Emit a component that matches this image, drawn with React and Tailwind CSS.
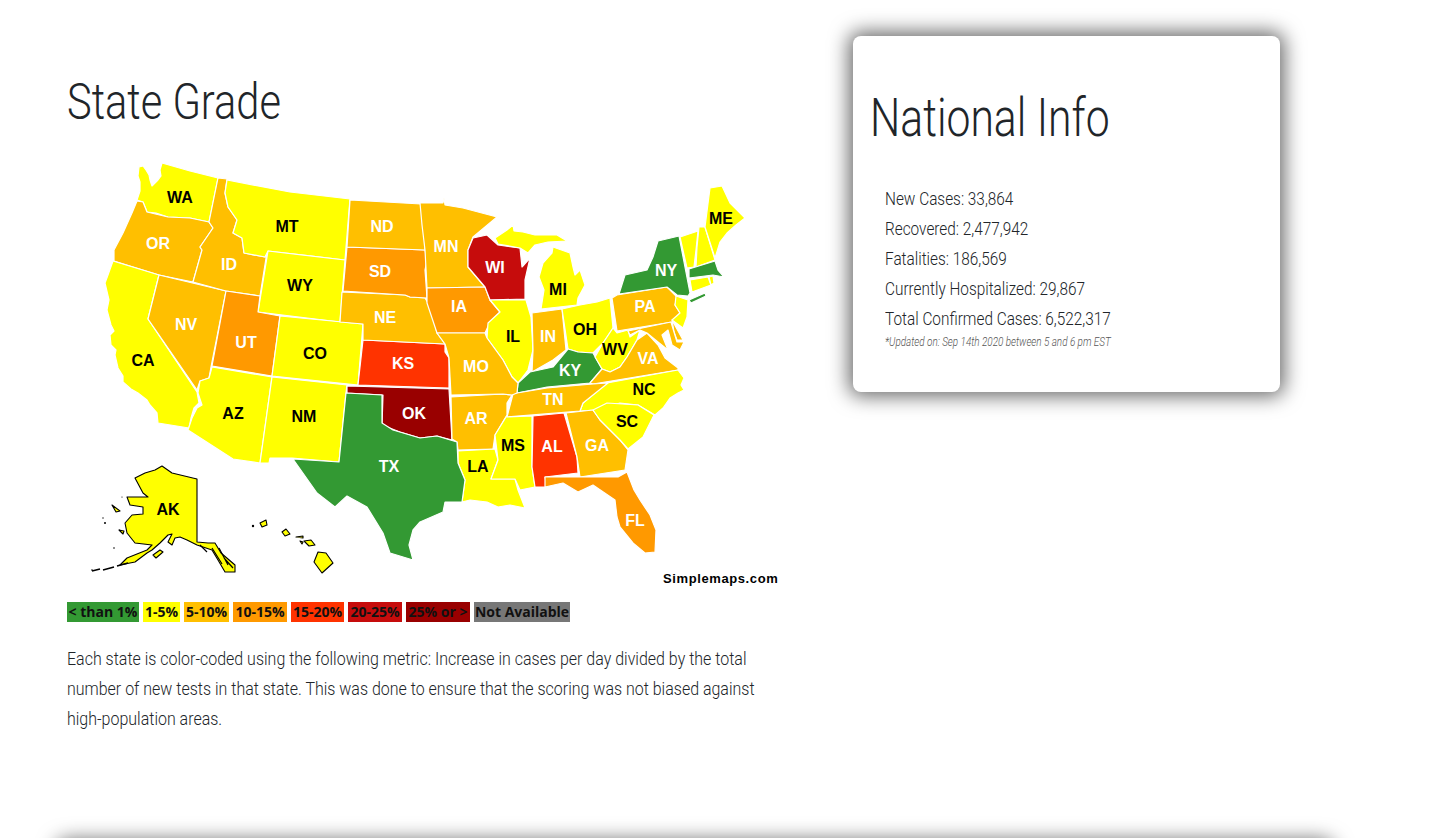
const G = "#339933", Y = "#ffff00", A = "#ffbf00", O = "#ff9900", R = "#ff3300", C = "#c60c0c", D = "#990000";

const states = [
  ["WA", Y, "139,167 143,166 146,170 149,175 150,180 152,186 155,183 158,180 161,176 160,170 162,163 190,171 218,178 209,222 190,218 168,217 156,213 147,212 143,202 137,200 140,191 140,182 138,176"],
  ["OR", A, "137,201 143,202 147,212 168,217 190,218 209,222 213,228 200,247 202,250 193,282 159,275 114,261 114,250 123,233 132,213"],
  ["CA", Y, "113,261 159,275 148,319 197,392 199,403 194,408 191,418 189,428 158,423 157,413 150,405 147,400 138,393 131,389 123,382 123,376 118,368 115,355 116,350 111,345 110,335 114,331 111,325 107,310 109,300 105,283 108,275"],
  ["NV", A, "159,275 226,291 211,367 209,378 200,381 197,390 148,319"],
  ["ID", A, "218,178 227,179 225,193 228,207 237,220 233,233 242,238 244,253 265,257 267,252 260,296 226,291 193,282 202,250 200,247 213,228 209,222"],
  ["MT", Y, "227,180 290,192 350,199 345,260 268,251 265,257 244,253 242,238 233,233 237,220 228,207 225,193"],
  ["WY", Y, "268,251 345,260 340,322 258,312"],
  ["UT", O, "226,291 260,296 258,312 280,316 272,376 212,366"],
  ["CO", Y, "280,316 363,324 358,385 272,376"],
  ["AZ", Y, "212,367 272,377 260,463 233,459 188,430 192,418 197,408 202,405 198,393 200,381 209,378"],
  ["NM", Y, "272,377 347,385 346,393 339,462 292,458 270,458 269,463 260,463"],
  ["OK", D, "347,386 449,389 452,440 437,436 420,438 400,432 382,425 383,395 347,393"],
  ["KS", R, "363,340 445,344 445,352 449,358 449,388 358,385"],
  ["NE", A, "342,292 405,295 410,297 425,298 432,310 437,333 445,344 363,340 363,324 340,322"],
  ["SD", O, "347,247 425,250 427,260 425,270 427,298 410,297 405,295 343,291"],
  ["ND", A, "350,200 421,204 425,225 425,250 347,247"],
  ["MN", A, "420,203 443,203 444,198 445,205 463,208 497,217 473,237 468,250 468,267 485,287 427,288 425,250 422,225"],
  ["IA", O, "427,288 485,287 490,300 500,312 490,322 485,333 437,333 432,318 427,303"],
  ["WI", C, "473,238 487,235 498,245 520,248 522,267 530,258 525,280 525,299 490,300 485,287 468,267 468,250"],
  ["IL", Y, "490,300 526,300 531,317 533,350 528,370 518,383 512,377 503,360 487,338 488,323 500,312"],
  ["IN", A, "532,313 562,309 566,350 553,360 532,372 533,350"],
  ["OH", Y, "562,309 580,305 597,302 610,298 613,328 603,343 593,353 578,352 568,349"],
  ["MI", Y, "541,309 544,290 539,277 543,263 552,253 553,247 570,253 573,267 575,275 580,270 585,285 578,298 577,305"],
  ["MI", Y, "495,238 507,230 513,225 514,231 523,232 535,235 557,235 567,241 548,242 535,245 528,253 520,248 498,244"],
  ["KY", G, "517,393 518,383 530,372 553,367 568,349 578,352 593,353 602,369 590,383 547,387"],
  ["WV", Y, "613,328 617,333 628,330 630,337 640,330 637,340 627,357 620,367 610,372 602,369 595,357 603,343"],
  ["VA", A, "590,383 602,369 610,372 620,367 627,357 637,340 647,333 658,345 665,358 678,368 678,370 593,384"],
  ["PA", A, "612,298 617,295 667,287 677,297 675,305 680,313 672,322 617,331"],
  ["NY", G, "619,294 625,275 647,270 653,257 658,241 679,236 690,293 688,296 677,295 667,287"],
  ["NY", G, "689,300 705,293 706,296 691,303"],
  ["VT", Y, "680,237 698,231 696,250 694,267 687,268"],
  ["NH", Y, "699,227 705,227 715,260 696,267 697,247"],
  ["ME", Y, "710,188 722,186 730,203 745,218 736,225 727,233 720,242 715,258 705,227"],
  ["MA", G, "689,269 715,261 718,270 724,277 713,275 689,278"],
  ["CT", Y, "690,280 708,277 711,285 692,292"],
  ["RI", Y, "709,277 713,276 714,283 711,285"],
  ["NJ", Y, "676,296 688,300 687,317 683,328 672,320 680,313 675,305"],
  ["DE", A, "672,320 683,340 677,340 674,332"],
  ["MD", A, "630,335 628,331 671,322 677,342 684,342 680,350 672,345 668,330 662,335 668,350 658,342 647,333 640,330"],
  ["NC", Y, "607,383 678,370 684,378 681,385 684,390 678,393 670,398 663,408 655,415 638,405 620,403 595,410 580,411 583,403"],
  ["TN", A, "513,394 517,393 547,388 593,384 608,383 583,403 580,411 507,417"],
  ["AR", A, "451,397 503,394 512,395 507,403 507,415 495,435 493,449 458,450 457,442 452,439"],
  ["MO", A, "437,333 485,333 487,338 503,360 512,377 518,383 517,393 512,395 503,394 451,395 449,358 445,344"],
  ["LA", Y, "458,451 495,449 498,460 491,479 515,479 518,490 525,508 510,505 498,507 487,502 470,500 462,502 465,480 458,463"],
  ["MS", Y, "506,417 532,416 532,467 535,487 520,490 515,479 491,479 498,460 495,435"],
  ["AL", R, "533,416 564,413 577,457 578,473 545,477 547,487 535,487 532,467"],
  ["GA", A, "566,413 593,410 600,420 620,440 628,450 625,470 580,477 577,457"],
  ["SC", Y, "593,410 607,403 638,405 654,415 643,437 628,449 620,440 600,420"],
  ["FL", O, "545,477 580,477 618,477 627,472 634,490 640,500 650,515 656,530 655,552 645,553 633,543 620,527 617,517 615,500 593,485 578,492 563,483 545,487"],
  ["TX", G, "346,393 382,395 382,423 393,430 420,438 437,436 457,442 458,463 465,480 462,502 445,502 443,512 420,522 413,530 409,545 413,560 390,553 383,533 367,507 347,496 335,507 317,493 293,459 339,462"],
];

const labels = [
  ["WA",180,197,"k"],["OR",158,243,"w"],["CA",143,360,"k"],["NV",186,324,"w"],["ID",229,264,"w"],["MT",287,226,"k"],["WY",300,285,"k"],["UT",246,342,"w"],["CO",315,353,"k"],["AZ",233,413,"k"],["NM",304,416,"k"],["ND",382,226,"w"],["SD",380,271,"w"],["NE",385,317,"w"],["KS",403,363,"w"],["OK",414,413,"w"],["TX",389,466,"w"],["MN",446,246,"w"],["IA",459,306,"w"],["MO",476,366,"w"],["AR",476,418,"w"],["LA",478,466,"k"],["WI",495,267,"w"],["IL",513,336,"k"],["MS",513,445,"k"],["AL",552,446,"w"],["TN",553,399,"w"],["KY",570,370,"w"],["IN",548,336,"w"],["OH",585,329,"k"],["MI",558,289,"k"],["GA",597,445,"w"],["FL",635,520,"w"],["SC",627,421,"k"],["NC",644,389,"k"],["VA",648,358,"w"],["WV",615,349,"k"],["PA",645,306,"w"],["NY",666,270,"w"],["ME",721,218,"k"],["AK",168,509,"k"],
];

const black = [
  "135,478 145,473 155,470 162,466 172,473 197,479 197,542 208,543 215,543 221,553 235,565 235,572 225,572 218,560 212,550 197,545 187,540 180,537 175,538 172,545 168,542 172,534 168,535 160,543 152,550 147,553 135,562 120,565 127,558 147,550 152,545 135,543 127,533 125,523 132,515 143,514 143,507 130,505 127,497 148,497 143,493",
  "153,555 160,550 163,552 156,558",
  "112,505 120,511 116,512",
  "119,530 124,531 123,534",
  "260,523 266,520 267,525 262,527",
  "282,532 286,529 290,534 285,536",
  "296,537 303,536 303,538",
  "304,541 311,540 315,545 309,546",
  "300,541 303,542 302,544",
  "318,552 326,553 333,563 322,573 314,562",
];

const legend = [
  ["< than 1%", G, "w-[72px]"],
  ["1-5%", Y, "w-[37px]"],
  ["5-10%", A, "w-[45px]"],
  ["10-15%", O, "w-[54px]"],
  ["15-20%", R, "w-[53px]"],
  ["20-25%", C, "w-[54px]"],
  ["25% or >", D, "w-[64px]"],
  ["Not Available", "#777777", "w-[96px]"],
];

const stats = [
  "New Cases: 33,864",
  "Recovered: 2,477,942",
  "Fatalities: 186,569",
  "Currently Hospitalized: 29,867",
  "Total Confirmed Cases: 6,522,317",
];

const para = [
  "Each state is color-coded using the following metric: Increase in cases per day divided by the total",
  "number of new tests in that state. This was done to ensure that the scoring was not biased against",
  "high-population areas.",
];

function USMap() {
  return (
    <svg viewBox="67 150 720 440" className="block w-[720px] h-[440px]">
      {states.map(([n, f, p], i) => (
        <polygon key={i} points={p} fill={f} stroke="#ffffff" strokeWidth="1.2" strokeLinejoin="round" />
      ))}
      {black.map((p, i) => (
        <polygon key={i} points={p} fill={Y} stroke="#000000" strokeWidth="1.1" strokeLinejoin="round" />
      ))}
      <path d="M200 545 L207 552 M212 548 L222 564 M219 548 L228 565 M224 558 L233 568" stroke="#000000" strokeWidth="1.2" fill="none" />
      <path d="M92 571 L100 569 M103 570 L114 567 M117 566 L128 563" stroke="#000000" strokeWidth="1.5" fill="none" />
      <g fill="#000000">
        <circle cx="105" cy="523" r="1" /><circle cx="103" cy="518" r="0.7" /><circle cx="122" cy="497" r="0.6" />
        <circle cx="114" cy="548" r="0.8" /><circle cx="253" cy="526" r="1.2" /><circle cx="92" cy="570" r="0.8" />
      </g>
      {labels.map(([t, x, y, c]) => (
        <text key={t} x={x} y={y} dy="5.5" textAnchor="middle" fill={c === "w" ? "#ffffff" : "#000000"}
          fontFamily="'Liberation Sans', Arial, sans-serif" fontWeight="700" fontSize="16">{t}</text>
      ))}
      <text x="663" y="583" fill="#000000" fontFamily="'Liberation Sans', Arial, sans-serif" fontWeight="700" fontSize="13" letterSpacing="0.6">Simplemaps.com</text>
    </svg>
  );
}

export default function App() {
  return (
    <div className="w-[1438px] h-[838px] overflow-hidden bg-white relative font-['Roboto',sans-serif] text-[#212529]">
      <div className="flex items-start pl-[67px]">
        <div className="w-[786px] shrink-0">
          <h1 className="mt-[68px] h-[82px] text-[50px] leading-[68px] font-light origin-left scale-x-[0.832] whitespace-nowrap">State Grade</h1>
          <USMap />
          <div className="mt-[12px] flex gap-[4px] h-[20px] font-['Open_Sans',sans-serif] font-bold text-[14px] leading-[20px] text-[#111111] whitespace-nowrap">
            {legend.map(([t, c, w]) => (
              <span key={t} style={{ background: c }} className={`${w} block text-center overflow-hidden`}>{t}</span>
            ))}
          </div>
          <div className="mt-[22px] text-[18px] leading-[30px] font-light">
            {para.map((l) => (
              <div key={l} className="origin-left scale-x-[0.888] whitespace-nowrap">{l}</div>
            ))}
          </div>
        </div>
        <div className="mt-[36px] w-[427px] h-[356px] shrink-0 bg-white rounded-lg shadow-[0_0_20px_4px_rgba(0,0,0,0.6)] pl-[17px]">
          <h2 className="mt-[44px] h-[76px] text-[54px] leading-[76px] font-light origin-left scale-x-[0.79] whitespace-nowrap">National Info</h2>
          <div className="mt-[28px] pl-[15px]">
            {stats.map((s) => (
              <div key={s} className="text-[18px] leading-[30px] font-light origin-left scale-x-[0.853] whitespace-nowrap">{s}</div>
            ))}
            <div className="text-[12px] leading-[16px] italic font-light text-[#555555] origin-left scale-x-[0.826] whitespace-nowrap">*Updated on: Sep 14th 2020 between 5 and 6 pm EST</div>
          </div>
        </div>
      </div>
      <div className="absolute left-[60px] top-[844px] w-[1270px] h-[200px] bg-white rounded-lg shadow-[0_0_20px_4px_rgba(0,0,0,0.6)]"></div>
    </div>
  );
}
